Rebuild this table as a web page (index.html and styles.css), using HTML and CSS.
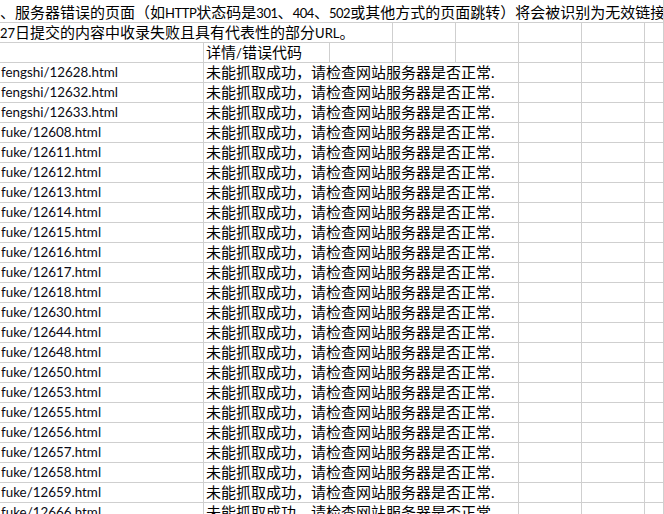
FILE: index.html
```html
<!DOCTYPE html>
<html lang="zh-CN">
<head>
<meta charset="utf-8">
<title>Sheet</title>
<link rel="stylesheet" href="styles.css">
</head>
<body>
<div class="sheet">
  <div class="c row1 span-all">、服务器错误的页面（如<span class="lat">HTTP</span>状态码是<span class="lat">301</span>、<span class="lat">404</span>、<span class="lat">502</span>或其他方式的页面跳转）将会被识别为无效链接</div>

  <div class="c span4 cut"><span class="lat">27</span>日提交的内容中收录失败且具有代表性的部分<span class="lat">URL</span>。</div>
  <div class="c"></div><div class="c"></div><div class="c"></div><div class="c"></div><div class="c"></div>

  <div class="c"></div>
  <div class="c span2 pad">详情<span class="lat">/</span>错误代码</div>
  <div class="c"></div><div class="c"></div><div class="c"></div><div class="c"></div><div class="c"></div><div class="c"></div>

  <div class="c url">fengshi/12628.html</div><div class="c span5 pad">未能抓取成功，请检查网站服务器是否正常.</div><div class="c"></div><div class="c"></div><div class="c"></div>
  <div class="c url">fengshi/12632.html</div><div class="c span5 pad">未能抓取成功，请检查网站服务器是否正常.</div><div class="c"></div><div class="c"></div><div class="c"></div>
  <div class="c url">fengshi/12633.html</div><div class="c span5 pad">未能抓取成功，请检查网站服务器是否正常.</div><div class="c"></div><div class="c"></div><div class="c"></div>
  <div class="c url">fuke/12608.html</div><div class="c span5 pad">未能抓取成功，请检查网站服务器是否正常.</div><div class="c"></div><div class="c"></div><div class="c"></div>
  <div class="c url">fuke/12611.html</div><div class="c span5 pad">未能抓取成功，请检查网站服务器是否正常.</div><div class="c"></div><div class="c"></div><div class="c"></div>
  <div class="c url">fuke/12612.html</div><div class="c span5 pad">未能抓取成功，请检查网站服务器是否正常.</div><div class="c"></div><div class="c"></div><div class="c"></div>
  <div class="c url">fuke/12613.html</div><div class="c span5 pad">未能抓取成功，请检查网站服务器是否正常.</div><div class="c"></div><div class="c"></div><div class="c"></div>
  <div class="c url">fuke/12614.html</div><div class="c span5 pad">未能抓取成功，请检查网站服务器是否正常.</div><div class="c"></div><div class="c"></div><div class="c"></div>
  <div class="c url">fuke/12615.html</div><div class="c span5 pad">未能抓取成功，请检查网站服务器是否正常.</div><div class="c"></div><div class="c"></div><div class="c"></div>
  <div class="c url">fuke/12616.html</div><div class="c span5 pad">未能抓取成功，请检查网站服务器是否正常.</div><div class="c"></div><div class="c"></div><div class="c"></div>
  <div class="c url">fuke/12617.html</div><div class="c span5 pad">未能抓取成功，请检查网站服务器是否正常.</div><div class="c"></div><div class="c"></div><div class="c"></div>
  <div class="c url">fuke/12618.html</div><div class="c span5 pad">未能抓取成功，请检查网站服务器是否正常.</div><div class="c"></div><div class="c"></div><div class="c"></div>
  <div class="c url">fuke/12630.html</div><div class="c span5 pad">未能抓取成功，请检查网站服务器是否正常.</div><div class="c"></div><div class="c"></div><div class="c"></div>
  <div class="c url">fuke/12644.html</div><div class="c span5 pad">未能抓取成功，请检查网站服务器是否正常.</div><div class="c"></div><div class="c"></div><div class="c"></div>
  <div class="c url">fuke/12648.html</div><div class="c span5 pad">未能抓取成功，请检查网站服务器是否正常.</div><div class="c"></div><div class="c"></div><div class="c"></div>
  <div class="c url">fuke/12650.html</div><div class="c span5 pad">未能抓取成功，请检查网站服务器是否正常.</div><div class="c"></div><div class="c"></div><div class="c"></div>
  <div class="c url">fuke/12653.html</div><div class="c span5 pad">未能抓取成功，请检查网站服务器是否正常.</div><div class="c"></div><div class="c"></div><div class="c"></div>
  <div class="c url">fuke/12655.html</div><div class="c span5 pad">未能抓取成功，请检查网站服务器是否正常.</div><div class="c"></div><div class="c"></div><div class="c"></div>
  <div class="c url">fuke/12656.html</div><div class="c span5 pad">未能抓取成功，请检查网站服务器是否正常.</div><div class="c"></div><div class="c"></div><div class="c"></div>
  <div class="c url">fuke/12657.html</div><div class="c span5 pad">未能抓取成功，请检查网站服务器是否正常.</div><div class="c"></div><div class="c"></div><div class="c"></div>
  <div class="c url">fuke/12658.html</div><div class="c span5 pad">未能抓取成功，请检查网站服务器是否正常.</div><div class="c"></div><div class="c"></div><div class="c"></div>
  <div class="c url">fuke/12659.html</div><div class="c span5 pad">未能抓取成功，请检查网站服务器是否正常.</div><div class="c"></div><div class="c"></div><div class="c"></div>
  <div class="c url">fuke/12666.html</div><div class="c span5 pad">未能抓取成功，请检查网站服务器是否正常.</div><div class="c"></div><div class="c"></div><div class="c"></div>
</div>
</body>
</html>
```
FILE: styles.css
```css
html, body {
  margin: 0;
  padding: 0;
  background: #ffffff;
  overflow: hidden;
  height: 514px;
}

.sheet {
  display: grid;
  grid-template-columns: 204px repeat(7, 63px) 1fr;
  grid-template-rows: 23px;
  grid-auto-rows: 20px;
  width: 664px;
  font-family: Lato, "Noto Sans CJK SC", sans-serif;
  font-size: 15px;
  color: #000;
}

.c {
  box-sizing: border-box;
  border-right: 1px solid #cfcfcf;
  border-bottom: 1px solid #cfcfcf;
  white-space: nowrap;
  overflow: hidden;
  line-height: 19px;
  padding-left: 1px;
}

.row1 {
  padding-top: 3px;
  padding-left: 0;
}

.lat {
  font-size: 13px;
}

.row1 .lat {
  letter-spacing: -0.45px;
}

.url {
  font-size: 13.4px;
  color: #0a0a14;
}

.span-all { grid-column: 1 / -1; }
.span2 { grid-column: span 2; }
.span4 { grid-column: span 4; }
.span5 { grid-column: span 5; }

.pad { padding-left: 2px; }

.cut { text-indent: -1px; }
```
